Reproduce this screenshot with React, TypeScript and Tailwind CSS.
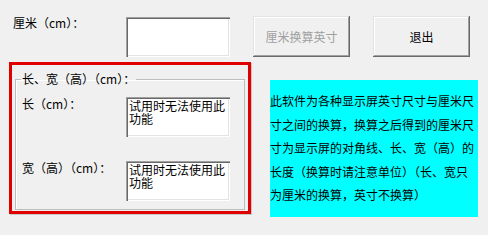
import React from "react";

const sunken =
  "bg-white shadow-[inset_1px_1px_0_#a0a0a0,inset_2px_2px_0_#696969,inset_-1px_-1px_0_#ffffff,inset_-2px_-2px_0_#e3e3e3]";
const raised =
  "bg-[#f0f0f0] shadow-[inset_-1px_-1px_0_#696969,inset_1px_1px_0_#e3e3e3,inset_-2px_-2px_0_#a0a0a0,inset_2px_2px_0_#ffffff]";

function TrialBox() {
  return (
    <div className={`w-[104px] h-[40px] ${sunken} pt-[2px] pl-[3px] text-[12px] text-black whitespace-nowrap`}>
      <div className="h-[13px] leading-[13px]">试用时无法使用此</div>
      <div className="h-[13px] leading-[13px]">功能</div>
    </div>
  );
}

export default function App() {
  return (
    <div className="w-[488px] h-[235px] bg-[#f0f0f0] overflow-hidden text-black text-[12px] font-['Noto_Sans_CJK_SC','Noto_Sans',sans-serif]">
      {/* top row */}
      <div className="flex items-start pt-[16px] h-[62px]">
        <div className="ml-[13px] w-[113px] leading-[14px] whitespace-nowrap">厘米（cm）：</div>
        <div className={`mt-[1px] w-[104px] h-[40px] ${sunken}`} />
        <div className={`ml-[23px] w-[97px] h-[41px] ${raised} flex items-center justify-center text-[#a0a0a0] text-[12px]`}>
          厘米换算英寸
        </div>
        <div className={`ml-[23px] w-[97px] h-[41px] ${raised} flex items-center justify-center text-[12px]`}>
          退出
        </div>
      </div>

      {/* bottom row */}
      <div className="flex items-start">
        <div className="ml-[9px] w-[242px] h-[152px] border-[3px] border-[#e00000] shadow-[1px_1px_0_#c8c8c8]">
          <fieldset className="ml-[3px] mt-[7px] w-[230px] border border-[#bcbcbc] shadow-[inset_1px_1px_0_#ffffff] px-0 pb-[8px]">
            <legend className="ml-[5px] px-[1px] leading-[14px] whitespace-nowrap">长、宽（高）（cm）：</legend>
            <div className="flex items-start mt-[11px] pl-[6px]">
              <div className="w-[104px] leading-[14px] whitespace-nowrap">长（cm）：</div>
              <TrialBox />
            </div>
            <div className="flex items-start mt-[24px] pl-[6px]">
              <div className="w-[104px] leading-[14px] whitespace-nowrap">宽（高）（cm）：</div>
              <TrialBox />
            </div>
          </fieldset>
        </div>

        <div className="ml-[19px] mt-[18px] w-[208px] h-[137px] bg-[#00ffff] pt-[9px] text-[12px] leading-[23.5px] whitespace-nowrap">
          <div>此软件为各种显示屏英寸尺寸与厘米尺</div>
          <div>寸之间的换算，换算之后得到的厘米尺</div>
          <div>寸为显示屏的对角线、长、宽（高）的</div>
          <div>长度（换算时请注意单位）（长、宽只</div>
          <div>为厘米的换算，英寸不换算）</div>
        </div>
      </div>
    </div>
  );
}
